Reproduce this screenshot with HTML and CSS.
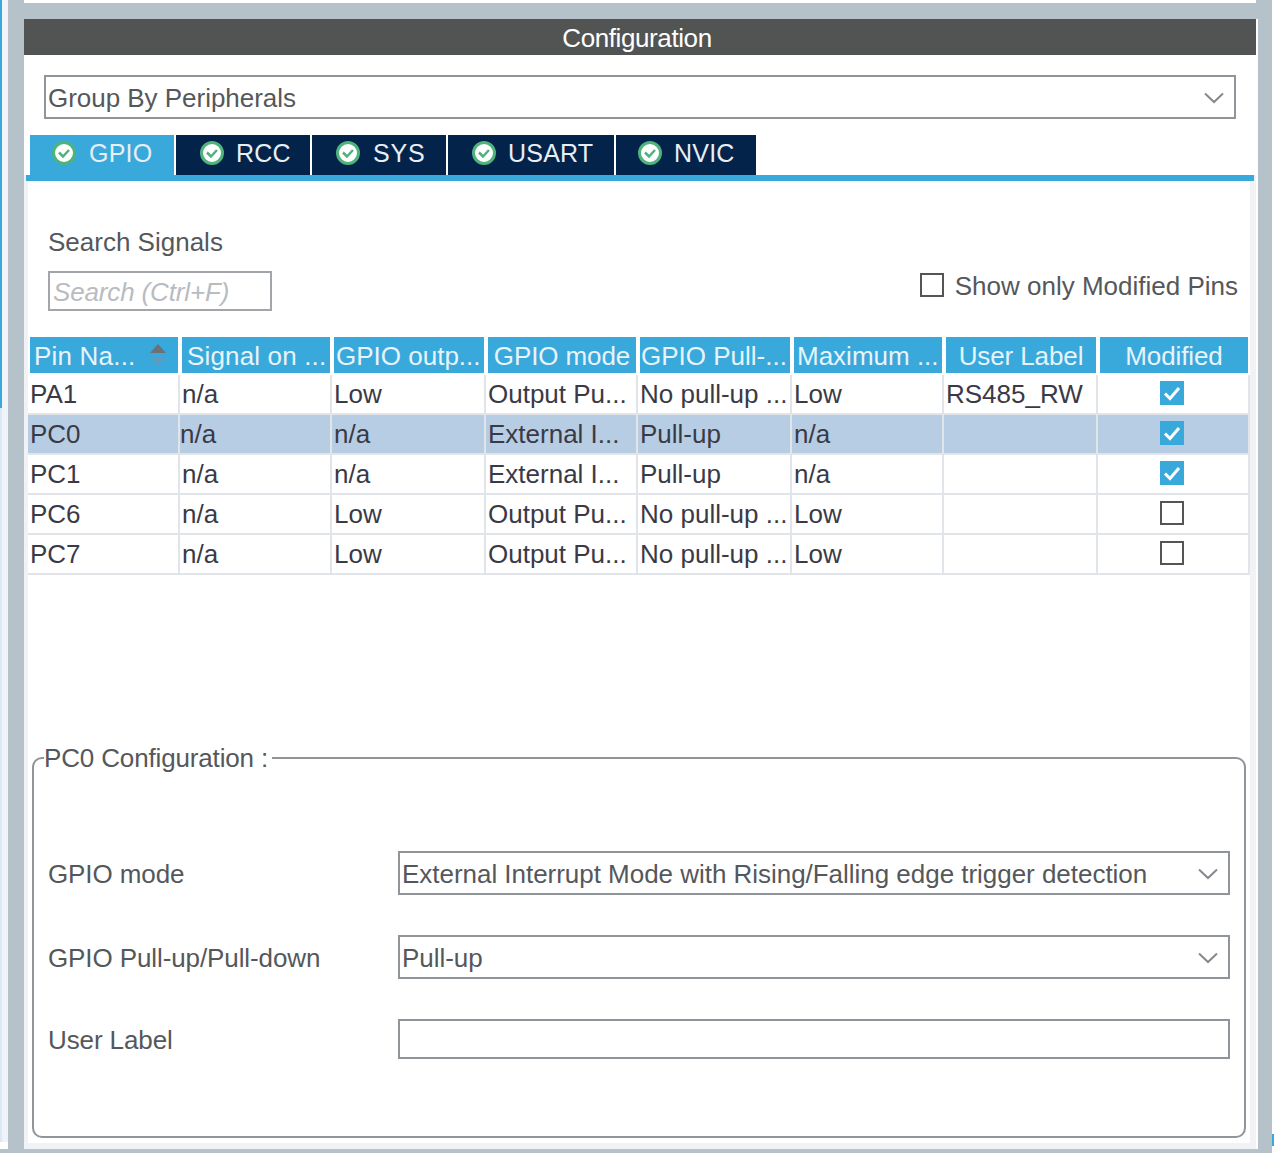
FILE: index.html
```html
<!DOCTYPE html>
<html lang="en">
<head>
<meta charset="utf-8">
<title>Configuration</title>
<link rel="stylesheet" href="styles.css">
</head>
<body>
<div class="shell">
  <div class="rail"><div class="rail-top"></div><div class="rail-low"></div><div class="rail-end"></div></div>
  <div class="window">
    <div class="top-strip"></div>
    <div class="pane">
      <div class="title">Configuration</div>
      <div class="group-row">
        <div class="select select-main"><span>Group By Peripherals</span>
          <svg class="chev" viewBox="0 0 20 12"><path d="M1 1.5 10 10 19 1.5"/></svg></div>
      </div>
      <div class="tabs">
        <div class="tab tab-on tab-gpio"><svg class="ok" viewBox="0 0 24 24"><circle cx="12" cy="12" r="10.5"/><path d="M7 11.5 11 15.5 17 9"/></svg><span>GPIO</span></div>
        <div class="tab tab-rcc"><svg class="ok" viewBox="0 0 24 24"><circle cx="12" cy="12" r="10.5"/><path d="M7 11.5 11 15.5 17 9"/></svg><span>RCC</span></div>
        <div class="tab tab-sys"><svg class="ok" viewBox="0 0 24 24"><circle cx="12" cy="12" r="10.5"/><path d="M7 11.5 11 15.5 17 9"/></svg><span>SYS</span></div>
        <div class="tab tab-usart"><svg class="ok" viewBox="0 0 24 24"><circle cx="12" cy="12" r="10.5"/><path d="M7 11.5 11 15.5 17 9"/></svg><span>USART</span></div>
        <div class="tab tab-nvic"><svg class="ok" viewBox="0 0 24 24"><circle cx="12" cy="12" r="10.5"/><path d="M7 11.5 11 15.5 17 9"/></svg><span>NVIC</span></div>
      </div>
      <div class="tab-line"></div>
      <div class="body">
        <div class="search-row">
          <div class="search-col">
            <div class="label search-label">Search Signals</div>
            <div class="search-box">Search (Ctrl+F)</div>
          </div>
          <div class="only-mod"><span class="box"></span><span class="label only-text">Show only Modified Pins</span></div>
        </div>
        <div class="table">
          <div class="row head">
            <div class="th th-sort">Pin Na...<svg class="sort" viewBox="0 0 16 24"><path class="up" d="M8 1 16 10H0Z"/><path class="down" d="M0 14H16L8 23Z"/></svg></div>
            <div class="th th-signal">Signal on ...</div>
            <div class="th th-out">GPIO outp...</div>
            <div class="th th-c">GPIO mode</div>
            <div class="th th-pull">GPIO Pull-...</div>
            <div class="th th-max">Maximum ...</div>
            <div class="th th-c">User Label</div>
            <div class="th th-c">Modified</div>
          </div>
          <div class="row">
            <div class="td">PA1</div><div class="td">n/a</div><div class="td">Low</div><div class="td">Output Pu...</div><div class="td">No pull-up ...</div><div class="td">Low</div><div class="td">RS485_RW</div>
            <div class="td td-c"><span class="check"><svg viewBox="0 0 24 24"><path d="M5 12.5 10 17.5 19 7"/></svg></span></div>
          </div>
          <div class="row sel">
            <div class="td">PC0</div><div class="td td-s">n/a</div><div class="td">n/a</div><div class="td">External I...</div><div class="td">Pull-up</div><div class="td">n/a</div><div class="td"></div>
            <div class="td td-c"><span class="check"><svg viewBox="0 0 24 24"><path d="M5 12.5 10 17.5 19 7"/></svg></span></div>
          </div>
          <div class="row">
            <div class="td">PC1</div><div class="td">n/a</div><div class="td">n/a</div><div class="td">External I...</div><div class="td">Pull-up</div><div class="td">n/a</div><div class="td"></div>
            <div class="td td-c"><span class="check"><svg viewBox="0 0 24 24"><path d="M5 12.5 10 17.5 19 7"/></svg></span></div>
          </div>
          <div class="row">
            <div class="td">PC6</div><div class="td">n/a</div><div class="td">Low</div><div class="td">Output Pu...</div><div class="td">No pull-up ...</div><div class="td">Low</div><div class="td"></div>
            <div class="td td-c"><span class="box"></span></div>
          </div>
          <div class="row">
            <div class="td">PC7</div><div class="td">n/a</div><div class="td">Low</div><div class="td">Output Pu...</div><div class="td">No pull-up ...</div><div class="td">Low</div><div class="td"></div>
            <div class="td td-c"><span class="box"></span></div>
          </div>
        </div>
        <fieldset class="pin-config">
          <legend>PC0 Configuration :</legend>
          <div class="form">
            <div class="form-row"><div class="label form-label">GPIO mode</div>
              <div class="select select-form"><span>External Interrupt Mode with Rising/Falling edge trigger detection</span>
              <svg class="chev" viewBox="0 0 20 12"><path d="M1 1.5 10 10 19 1.5"/></svg></div></div>
            <div class="form-row"><div class="label form-label">GPIO Pull-up/Pull-down</div>
              <div class="select select-form"><span>Pull-up</span>
              <svg class="chev" viewBox="0 0 20 12"><path d="M1 1.5 10 10 19 1.5"/></svg></div></div>
            <div class="form-row form-row-input"><div class="label form-label">User Label</div>
              <div class="text-input"></div></div>
          </div>
        </fieldset>
      </div>
    </div>
  </div>
  <div class="scroll"></div>
  <div class="edge"><span class="edge-mark"></span></div>
</div>
</body>
</html>
```
FILE: styles.css
```css
* { box-sizing: border-box; }
html, body { margin: 0; padding: 0; background: #fff; }
body {
  width: 1274px;
  height: 1171px;
  overflow: hidden;
  font-family: "Liberation Sans", Arial, sans-serif;
  font-size: 26px;
  color: #55585b;
}
.shell { display: flex; height: 1153px; }

/* left rail */
.rail { width: 8px; display: flex; flex-direction: column; padding-bottom: 4px; background: #b6c2c9; }
.rail-top { height: 408px; background: #f1f5f9; border-left: 2px solid #39a9dc; }
.rail-low { flex: 1; background: #eef4fa; border-left: 2px solid #dbe8f5; }
.rail-end { height: 7px; background: #fff; }

/* window */
.window { width: 1250px; padding-left: 16px; padding-bottom: 4px; background: #b6c2c9; display: flex; flex-direction: column; }
.top-strip { height: 3px; margin-right: 2px; background: #fff; }
.pane { margin-top: 16px; flex: 1; border-right: 2px solid #fff; background: #f0f2f5; display: flex; flex-direction: column; }
.title { height: 36px; line-height: 38px; background: #525453; color: #fff; text-align: center; letter-spacing: -.4px; padding-right: 6px; }
.group-row { padding: 20px 20px 16px 20px; background: #fff; }
.select { position: relative; display: flex; align-items: center; border: 2px solid #90959a; background: #fff; padding-left: 2px; }
.select span { letter-spacing: -.03px; }
.select-main { height: 44px; width: 1192px; }
.select-main span { padding-top: 2px; }
.chev { position: absolute; right: 10px; top: 50%; width: 20px; height: 12px; margin-top: -5px; fill: none; stroke: #85898d; stroke-width: 2; }

/* tabs */
.tabs { display: flex; gap: 2px; padding-left: 6px; height: 40px; background: #fff; }
.tab { display: flex; align-items: center; background: #03234b; color: #e9eef3; height: 40px; padding-left: 24px; font-size: 25px; padding-bottom: 4px; }
.tab span { margin-left: 12px; letter-spacing: .2px; }
.tab-gpio { width: 144px; padding-left: 22px; }
.tab-gpio span, .tab-sys span { margin-left: 13px; }
.tab-sys span { letter-spacing: .8px; }
.tab-rcc { width: 134px; }
.tab-sys { width: 134px; }
.tab-usart { width: 166px; }
.tab-nvic { width: 140px; padding-left: 22px; }
.tab-on { background: #39a9dc; }
.ok { width: 24px; height: 24px; flex: none; }
.ok circle { fill: #fff; stroke: #4fb37c; stroke-width: 3; }
.ok path { fill: none; stroke: #4fb37c; stroke-width: 2.5; }
.tab-line { height: 6px; margin: 0 2px; background: #39a9dc; }

/* body */
.body { flex: 1; margin: 0 6px 6px 4px; background: #fff; display: flex; flex-direction: column; }
.search-row { display: flex; justify-content: space-between; align-items: flex-end; padding: 46px 12px 0 20px; height: 156px; }
.search-col { display: flex; flex-direction: column; }
.search-label { line-height: 30px; margin-bottom: 14px; }
.search-box { width: 224px; height: 40px; line-height: 39px; border: 2px solid #a2a6aa; padding-left: 3px; color: #b9bcbf; font-style: italic; letter-spacing: -.15px; margin-bottom: 26px; }
.only-mod { display: flex; align-items: center; gap: 11px; margin-bottom: 35px; }
.only-text { padding-top: 4px; }
.box { display: block; width: 24px; height: 24px; border: 2px solid #555; background: #fff; }

/* table */
.table { display: flex; flex-direction: column; }
.row { display: grid; grid-template-columns: 152px 152px 154px 152px 154px 152px 154px 152px; height: 40px; background: #fff; }
.row.head { height: 38px; }
.row.sel { background: #b7cde4; }
.th { height: 36px; margin: 0 2px; background: #39a9dc; color: #e8f3fa; line-height: 39px; padding-left: 4px; white-space: nowrap; overflow: hidden; position: relative; }
.th-sort { letter-spacing: .2px; }
.th-signal { padding-left: 5px; letter-spacing: .15px; }
.th-out { padding-left: 2px; }
.th-pull { padding-left: 1px; }
.th-max { padding-left: 3px; }
.th-c { padding-left: 0; text-align: center; letter-spacing: -.1px; }
.td { border-right: 2px solid #e1e5e9; border-bottom: 2px solid #e1e5e9; padding-left: 2px; line-height: 39px; color: #3a3a46; white-space: nowrap; overflow: hidden; }
.td-s { padding-left: 0; }
.td-c { display: flex; align-items: center; padding-left: 62px; }
.td-c .box, .check { margin-top: -2px; }
.sort { position: absolute; right: 12px; top: 6px; width: 16px; height: 24px; }
.sort .up { fill: #6b7176; }
.sort .down { fill: #5d9cc0; }
.check { display: block; width: 24px; height: 24px; background: #39a9dc; }
.check svg { display: block; width: 24px; height: 24px; fill: none; stroke: #fff; stroke-width: 3; }

/* fieldset */
.pin-config { margin: 167px 4px 0 4px; padding: 0; height: 396px; border: 2px solid #90959a; border-radius: 10px; min-width: 0; }
.pin-config legend { margin-left: 10px; padding: 1px 4px 0 0; line-height: 30px; color: #55585b; letter-spacing: -.15px; }
.form { display: flex; flex-direction: column; padding: 78px 14px 0 14px; }
.form-row { display: flex; align-items: center; height: 44px; margin-bottom: 40px; }
.form-row-input { height: 40px; margin-bottom: 0; }
.form-label { width: 350px; padding-top: 2px; letter-spacing: -.1px; }
.select-form { width: 832px; height: 44px; }
.select-form span { padding-top: 2px; }
.text-input { width: 832px; height: 40px; border: 2px solid #90959a; background: #fff; }

/* right side */
.scroll { width: 14px; background: #b6c2c9; }
.edge { width: 2px; position: relative; background: #fff; }
.edge-mark { position: absolute; left: 0; top: 1134px; width: 2px; height: 12px; background: #39a9dc; }
```
